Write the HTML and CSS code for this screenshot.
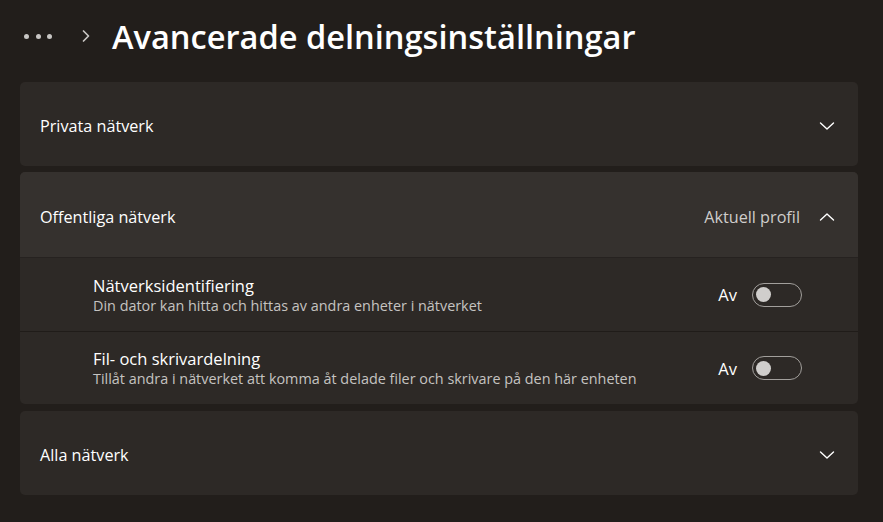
FILE: index.html
```html
<!DOCTYPE html>
<html lang="sv">
    <head>
        <meta charset="utf-8">
        <title>Avancerade delningsinställningar</title>
        <link rel="stylesheet" href="styles.css">
    </head>
    <body>
        <div class="page">
            <div class="breadcrumb">
                <span class="more"><i></i><i></i><i></i></span>
                <svg class="crumb-sep" width="12" height="14" viewBox="0 0 12 14">
                    <path d="M3.5 2 L8.5 7 L3.5 12" fill="none" stroke="#c8c6c4" stroke-width="1.7" stroke-linecap="round" stroke-linejoin="round"/>
                </svg>
                <h1>Avancerade delningsinställningar</h1>
            </div>

            <div class="card">
                <div class="card-head">
                    <span class="card-title">Privata nätverk</span>
                    <svg class="chevron" width="16" height="10" viewBox="0 0 16 10">
                        <path d="M1.5 2 L8 8 L14.5 2" fill="none" stroke="#fff" stroke-width="1.4" stroke-linecap="round" stroke-linejoin="round"/>
                    </svg>
                </div>
            </div>

            <div class="card open">
                <div class="card-head">
                    <span class="card-title">Offentliga nätverk</span>
                    <span class="card-note">Aktuell profil</span>
                    <svg class="chevron" width="16" height="10" viewBox="0 0 16 10">
                        <path d="M1.5 8 L8 2 L14.5 8" fill="none" stroke="#fff" stroke-width="1.4" stroke-linecap="round" stroke-linejoin="round"/>
                    </svg>
                </div>
                <div class="setting">
                    <div class="setting-text">
                        <div class="setting-name">Nätverksidentifiering</div>
                        <div class="setting-desc">Din dator kan hitta och hittas av andra enheter i nätverket</div>
                    </div>
                    <span class="state">Av</span>
                    <span class="toggle"><span class="knob"></span></span>
                </div>
                <div class="setting">
                    <div class="setting-text">
                        <div class="setting-name">Fil- och skrivardelning</div>
                        <div class="setting-desc">Tillåt andra i nätverket att komma åt delade filer och skrivare på den här enheten</div>
                    </div>
                    <span class="state">Av</span>
                    <span class="toggle"><span class="knob"></span></span>
                </div>
            </div>

            <div class="card last">
                <div class="card-head">
                    <span class="card-title">Alla nätverk</span>
                    <svg class="chevron" width="16" height="10" viewBox="0 0 16 10">
                        <path d="M1.5 2 L8 8 L14.5 2" fill="none" stroke="#fff" stroke-width="1.4" stroke-linecap="round" stroke-linejoin="round"/>
                    </svg>
                </div>
            </div>
        </div>
    </body>
</html>
```

FILE: styles.css
```css
* {
    box-sizing: border-box;
}

body {
    margin: 0;
    background: #221e1b;
    color: #fff;
    font-family: 'Open Sans', 'Noto Sans', sans-serif;
    height: 522px;
    overflow: hidden;
}

.page {
    padding: 0 25px 0 20px;
}

.breadcrumb {
    display: flex;
    align-items: center;
    height: 82px;
    padding: 0 0 10px 4px;
}

.more {
    display: flex;
    gap: 6.5px;
    margin-right: 28px;
}

.more i {
    width: 5px;
    height: 5px;
    border-radius: 50%;
    background: #c8c6c4;
}

.crumb-sep {
    margin-right: 20px;
}

h1 {
    margin: 0;
    font-size: 32.6px;
    font-weight: 600;
    letter-spacing: 0;
}

.card {
    background: #2d2926;
    border-radius: 5px;
    margin-bottom: 6px;
    overflow: hidden;
}

.card.open {
    margin-bottom: 7px;
}

.card-head {
    display: flex;
    align-items: center;
    height: 84px;
    padding: 4px 23px 0 20px;
}

.open .card-head {
    height: 86px;
    background: #35312e;
    border-bottom: 1px solid #262220;
}

.card-title {
    flex: 1;
    font-size: 16.2px;
}

.card-note {
    font-size: 16.2px;
    color: #cfcdcb;
    margin-right: 19px;
}

.setting {
    display: flex;
    align-items: center;
    height: 73px;
    padding: 0 56px 0 73px;
}

.setting + .setting {
    border-top: 1px solid #201c19;
    height: 73px;
}

.setting-text {
    flex: 1;
}

.setting-name {
    font-size: 16.5px;
    line-height: 21px;
}

.setting-desc {
    font-size: 14.4px;
    line-height: 19px;
    color: #c5c3c1;
}

.state {
    font-size: 16.5px;
    margin-right: 15px;
}

.toggle {
    display: flex;
    align-items: center;
    width: 50px;
    height: 24px;
    border: 1px solid #a29f9c;
    border-radius: 12px;
    padding-left: 3px;
}

.knob {
    width: 15px;
    height: 15px;
    border-radius: 50%;
    background: #d0cecc;
}
```
